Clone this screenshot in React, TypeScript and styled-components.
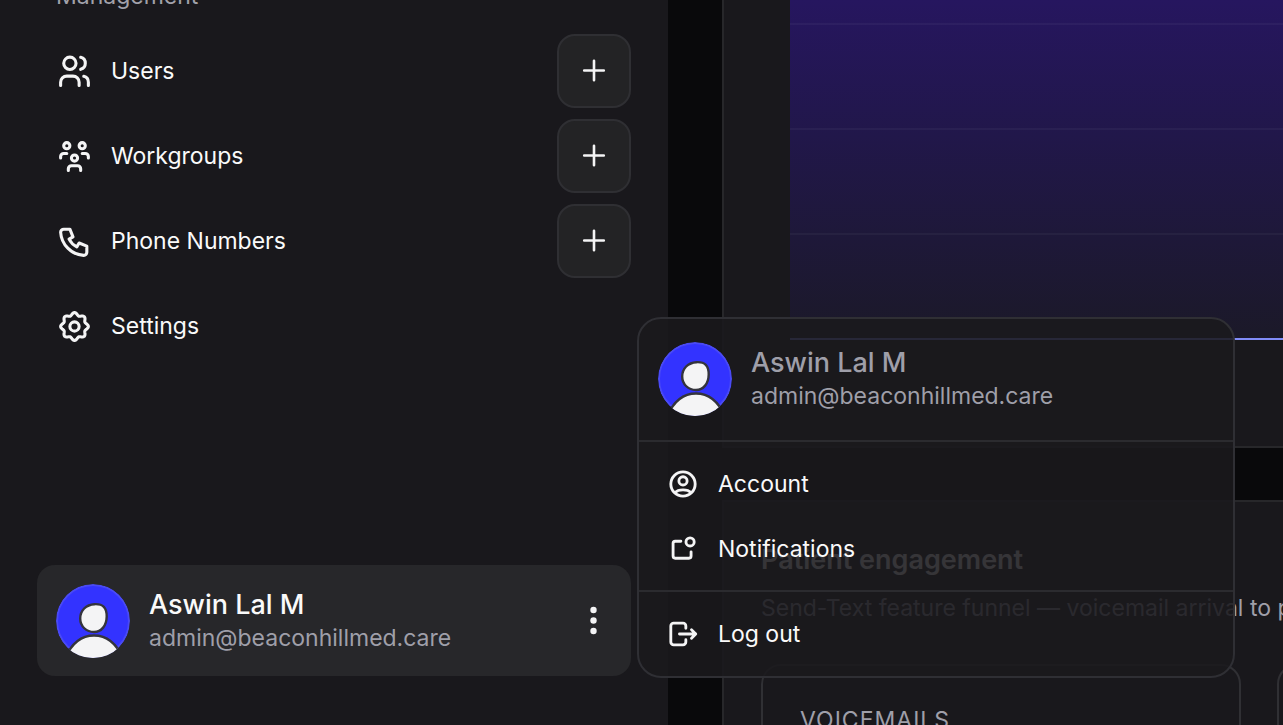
import React from "react";
import styled, { createGlobalStyle, css } from "styled-components";

const GlobalStyle = createGlobalStyle`
  *, *::before, *::after { box-sizing: border-box; }
  html, body, #root { height: 100%; }
  body {
    margin: 0;
    overflow: hidden;
    background: #09090b;
    color: #fafafa;
    font-family: Inter, "Liberation Sans", sans-serif;
    font-size: 23px;
    line-height: 32px;
  }
  button, a { font: inherit; color: inherit; text-decoration: none; }
  h2, p, ul { margin: 0; padding: 0; }
  ul { list-style: none; }
`;

const Shell = styled.div`
  display: grid;
  grid-template-columns: minmax(0, 668fr) minmax(0, 561fr);
  column-gap: 54px;
  height: 100vh;
`;

const Sidebar = styled.aside`
  display: flex;
  flex-direction: column;
  justify-content: space-between;
  padding: 0 37px 49px;
  background: #19181c;
`;

const NavSection = styled.nav`
  margin-top: -20px;
`;

const NavHeading = styled.p`
  padding-left: 19px;
  color: #a1a1aa;
`;

const NavList = styled.ul`
  display: flex;
  flex-direction: column;
  gap: 11px;
  margin-top: 22px;
`;

const NavItem = styled.li`
  display: flex;
  align-items: center;
  justify-content: space-between;
  height: 74px;
`;

const NavLink = styled.a`
  display: flex;
  align-items: center;
  gap: 18px;
  padding-left: 19px;
`;

const Icon = styled.svg<{ $size: number }>`
  display: block;
  flex: none;
  width: ${(p) => p.$size}px;
  height: ${(p) => p.$size}px;
  fill: none;
  stroke: #f4f4f5;
  stroke-width: 2;
  stroke-linecap: round;
  stroke-linejoin: round;
`;

const AddButton = styled.button`
  display: grid;
  place-items: center;
  width: 74px;
  height: 74px;
  padding: 0;
  border: 2px solid #2f2f33;
  border-radius: 18px;
  background: #232325;
`;

const UserArea = styled.div`
  position: relative;
`;

const UserCard = styled.button`
  display: flex;
  align-items: center;
  gap: 19px;
  width: 100%;
  height: 111px;
  padding: 0 19px;
  border: 0;
  border-radius: 18px;
  background: #27272a;
  text-align: left;
`;

const Identity = styled.span`
  display: flex;
  flex-direction: column;
  flex: 1;
  min-width: 0;
`;

const Name = styled.span<{ $muted?: boolean }>`
  font-size: 27px;
  line-height: 34px;
  font-weight: 500;
  color: ${(p) => (p.$muted ? "#9f9fa9" : "#fafafa")};
`;

const Email = styled.span`
  color: #9f9fa9;
`;

const Menu = styled.div`
  position: absolute;
  left: calc(100% + 6px);
  bottom: -2px;
  z-index: 2;
  width: 598px;
  padding-bottom: 1px;
  border: 2px solid #2f2f34;
  border-radius: 24px;
  background: rgba(26, 25, 29, 0.88);
`;

const MenuHeader = styled.div`
  display: flex;
  align-items: center;
  gap: 19px;
  height: 121px;
  padding: 0 19px 2px;
`;

const MenuGroup = styled.div`
  padding: 9px 0;
  border-top: 2px solid #2b2b2f;
`;

const MenuItem = styled.button`
  display: flex;
  align-items: center;
  gap: 18px;
  width: 100%;
  height: 65px;
  padding: 0 27px;
  border: 0;
  background: transparent;
  text-align: left;
`;

const Main = styled.main`
  display: flex;
  flex-direction: column;
  gap: 52px;
  min-width: 0;
  overflow: hidden;
`;

const panel = css`
  border: 2px solid #27272a;
  border-right: 0;
  background: #19181c;
`;

const ChartPanel = styled.section`
  ${panel}
  flex: none;
  border-top: 0;
  height: 448px;
  padding-left: 66px;
`;

const Chart = styled.svg`
  display: block;
  width: 100%;
  height: 340px;
`;

const EngagementPanel = styled.section`
  ${panel}
  flex: 1 0 auto;
  padding: 40px 0 0 37px;
  white-space: nowrap;
`;

const PanelTitle = styled.h2`
  font-size: 27px;
  line-height: 36px;
  font-weight: 600;
`;

const PanelText = styled.p`
  margin-top: 14px;
  color: #9f9fa9;
`;

const Stats = styled.div`
  display: flex;
  gap: 36px;
  margin-top: 40px;
`;

const StatCard = styled.article`
  flex: none;
  width: 480px;
  height: 180px;
  padding: 38px 37px;
  border: 2px solid #303034;
  border-radius: 20px;
  color: #9f9fa9;
  letter-spacing: 1px;
`;

function UsersIcon() {
  return (
    <Icon $size={37} viewBox="0 0 24 24">
      <circle cx="9" cy="6.700" r="4" />
      <path d="M3 21v-2a4 4 0 0 1 4-4h4a4 4 0 0 1 4 4v2M16 2.830a4 4 0 0 1 0 7.750M18 15.150a4 4 0 0 1 3 3.850v2" />
    </Icon>
  );
}

function WorkgroupsIcon() {
  return (
    <Icon $size={37} viewBox="0 0 24 24">
      <circle cx="7" cy="5" r="2" />
      <circle cx="17" cy="5" r="2" />
      <circle cx="12" cy="13" r="2" />
      <path d="M3 13v-1a2 2 0 0 1 2-2h2M21 13v-1a2 2 0 0 0-2-2h-2M8 21v-1a2 2 0 0 1 2-2h4a2 2 0 0 1 2 2v1" />
    </Icon>
  );
}

function PhoneIcon() {
  return (
    <Icon $size={37} viewBox="0 0 24 24">
      <path d="M5 4h4l2 5-2.500 1.500a11 11 0 0 0 5 5L15 13l5 2v4a2 2 0 0 1-2 2A16 16 0 0 1 3 6a2 2 0 0 1 2-2" />
    </Icon>
  );
}

// Eight-lobed cog outline, sampled around the circle.
const cogPath =
  "M" +
  Array.from({ length: 96 }, (_, i) => {
    const angle = (i / 96) * Math.PI * 2;
    const radius = 8.15 + 0.85 * Math.cos(8 * angle);
    return `${(12 + radius * Math.cos(angle)).toFixed(2)} ${(12 + radius * Math.sin(angle)).toFixed(2)}`;
  }).join("L") +
  "Z";

function SettingsIcon() {
  return (
    <Icon $size={37} viewBox="0 0 24 24">
      <circle cx="12" cy="12" r="3" />
      <path d={cogPath} />
    </Icon>
  );
}

function AccountIcon() {
  return (
    <Icon $size={34} viewBox="0 0 24 24">
      <circle cx="12" cy="12" r="8.600" />
      <circle cx="12" cy="9.800" r="2.900" />
      <path d="M6.300 18.200c1.200-1.400 3.200-2.100 5.700-2.100s4.500.7 5.700 2.100" />
    </Icon>
  );
}

function NotificationsIcon() {
  return (
    <Icon $size={34} viewBox="0 0 24 24">
      <circle cx="17" cy="7" r="2.900" />
      <path d="M10.500 6.500h-4A1.500 1.500 0 0 0 5 8v9a1.500 1.500 0 0 0 1.500 1.500h9.700a1.500 1.500 0 0 0 1.500-1.500v-3" />
    </Icon>
  );
}

function LogoutIcon() {
  return (
    <Icon $size={34} viewBox="0 0 24 24">
      <path d="M14 8V6.300a2 2 0 0 0-2-2H5.400a2 2 0 0 0-2 2v11.400a2 2 0 0 0 2 2H12a2 2 0 0 0 2-2V16M9.500 12H21M18 9l3 3-3 3" />
    </Icon>
  );
}

function PlusIcon() {
  return (
    <Icon $size={28} viewBox="0 0 28 28">
      <path d="M14 3.700v19.600M4.200 13.500h19.600" strokeWidth="2.600" />
    </Icon>
  );
}

function DotsIcon() {
  return (
    <Icon $size={37} viewBox="0 0 37 37">
      <g fill="#f4f4f5" stroke="none">
        <circle cx="18.500" cy="8" r="3.200" />
        <circle cx="18.500" cy="18.500" r="3.200" />
        <circle cx="18.500" cy="29" r="3.200" />
      </g>
    </Icon>
  );
}

function Avatar({ id }: { id: string }) {
  return (
    <Icon $size={74} viewBox="0 0 74 74">
      <clipPath id={id}>
        <circle cx="37" cy="37" r="37" />
      </clipPath>
      <g clipPath={`url(#${id})`}>
        <circle cx="37" cy="37" r="36" fill="#3333ff" stroke="#4a4af5" />
        <g fill="#f4f4f5" stroke="#34343c" strokeWidth="2.400">
          <path d="M8 77C15 59 26 51.500 38 51.500S61 59 68 77z" />
          <path d="M38.500 20.200c8.500-.4 12.300 3.300 12.200 12.300C50.600 41.500 45.500 48 38 48S24.200 42.500 24.200 34.500 30 20.600 38.500 20.200z" />
        </g>
      </g>
    </Icon>
  );
}

const navItems = [
  { label: "Users", icon: <UsersIcon />, add: true },
  { label: "Workgroups", icon: <WorkgroupsIcon />, add: true },
  { label: "Phone Numbers", icon: <PhoneIcon />, add: true },
  { label: "Settings", icon: <SettingsIcon />, add: false },
];

export default function App() {
  return (
    <>
      <GlobalStyle />
      <Shell>
        <Sidebar>
          <NavSection aria-label="Management">
            <NavHeading>Management</NavHeading>
            <NavList>
              {navItems.map((item) => (
                <NavItem key={item.label}>
                  <NavLink href="#">
                    {item.icon}
                    {item.label}
                  </NavLink>
                  {item.add && (
                    <AddButton aria-label={`Add ${item.label}`}>
                      <PlusIcon />
                    </AddButton>
                  )}
                </NavItem>
              ))}
            </NavList>
          </NavSection>
          <UserArea>
            <UserCard aria-haspopup="menu" aria-expanded="true">
              <Avatar id="avatar-card" />
              <Identity>
                <Name>Aswin Lal M</Name>
                <Email>admin@beaconhillmed.care</Email>
              </Identity>
              <DotsIcon />
            </UserCard>
            <Menu role="menu">
              <MenuHeader>
                <Avatar id="avatar-menu" />
                <Identity>
                  <Name $muted>Aswin Lal M</Name>
                  <Email>admin@beaconhillmed.care</Email>
                </Identity>
              </MenuHeader>
              <MenuGroup>
                <MenuItem role="menuitem">
                  <AccountIcon />
                  Account
                </MenuItem>
                <MenuItem role="menuitem">
                  <NotificationsIcon />
                  Notifications
                </MenuItem>
              </MenuGroup>
              <MenuGroup>
                <MenuItem role="menuitem">
                  <LogoutIcon />
                  Log out
                </MenuItem>
              </MenuGroup>
            </Menu>
          </UserArea>
        </Sidebar>
        <Main>
          <ChartPanel>
            <Chart aria-hidden="true">
              <defs>
                <linearGradient id="area" x1="0" y1="0" x2="0" y2="1">
                  <stop offset="0" stopColor="#26165f" />
                  <stop offset="0.4" stopColor="#21174a" />
                  <stop offset="1" stopColor="#1b1928" />
                </linearGradient>
              </defs>
              <rect width="100%" height="340" fill="url(#area)" />
              <g fill="#ffffff" fillOpacity="0.04">
                <rect y="23" width="100%" height="2" />
                <rect y="128" width="100%" height="2" />
                <rect y="233" width="100%" height="2" />
              </g>
              <rect y="338" width="100%" height="2" fill="#818cf8" />
            </Chart>
          </ChartPanel>
          <EngagementPanel>
            <PanelTitle>Patient engagement</PanelTitle>
            <PanelText>Send-Text feature funnel — voicemail arrival to patient reply</PanelText>
            <Stats>
              <StatCard>VOICEMAILS</StatCard>
              <StatCard />
            </Stats>
          </EngagementPanel>
        </Main>
      </Shell>
    </>
  );
}
